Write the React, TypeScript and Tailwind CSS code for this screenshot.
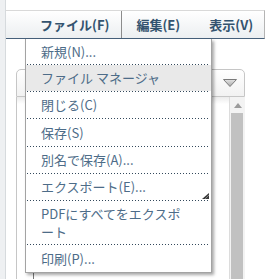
import type { ReactNode } from "react";

type Item = { label: ReactNode; h: string; active?: boolean; grip?: boolean };

const ITEMS: Item[] = [
  { label: "新規(N)...", h: "h-[25px]" },
  { label: "ファイル マネージャ", h: "h-[26px]", active: true },
  { label: "閉じる(C)", h: "h-[26px]" },
  { label: "保存(S)", h: "h-[27px]" },
  { label: "別名で保存(A)...", h: "h-[26px]" },
  { label: "エクスポート(E)...", h: "h-[26px]", grip: true },
  {
    label: (
      <>
        PDFにすべてをエクスポ
        <br />
        ート
      </>
    ),
    h: "h-[43px]",
  },
  { label: "印刷(P)...", h: "h-[27px]" },
];

function Dots() {
  return (
    <div className="mx-px h-px shrink-0 bg-[linear-gradient(to_right,#34495c_1px,transparent_1px)] bg-[length:3px_1px]" />
  );
}

function FileMenu() {
  return (
    <div className="absolute left-[25px] top-[39px] flex w-[187px] flex-col border border-t-0 border-[#a3a3a3] bg-white text-[13px] text-[#4d6c88] shadow-[2px_2px_3px_rgba(0,0,0,0.35)]">
      {ITEMS.map((item, i) => (
        <div key={i} className="flex flex-col">
          {i > 0 && <Dots />}
          <div
            className={
              "relative flex items-center whitespace-nowrap pl-[15px] leading-[18px] " +
              item.h +
              (item.active ? " bg-[#e9e9e9]" : "")
            }
          >
            <span>{item.label}</span>
            {item.grip && (
              <svg
                className="absolute bottom-px right-[2px]"
                width="7"
                height="6"
                viewBox="0 0 7 6"
              >
                <polygon points="7,0 7,6 0,6" fill="#3a3a3a" />
                <line x1="3" y1="6" x2="7" y2="2" stroke="#9a9a9a" strokeWidth="0.8" />
              </svg>
            )}
          </div>
        </div>
      ))}
    </div>
  );
}

export default function App() {
  return (
    <div className="relative flex h-[279px] w-[268px] overflow-hidden bg-white font-['Noto_Sans_CJK_JP','Noto_Sans',sans-serif]">
      <div className="w-[6px] shrink-0 border-r border-[#d6dadd] bg-[#eef0f2]" />

      <div className="flex min-w-0 flex-1 flex-col">
        <div className="h-[10px] shrink-0" />

        {/* menu bar */}
        <div className="flex h-[29px] w-[259px] shrink-0 items-center overflow-hidden whitespace-nowrap border-b border-r border-t border-b-[#46607a] border-r-[#b4b4b4] border-t-[#d9d9d9] bg-gradient-to-b from-white to-[#eceff1] pl-[34px] text-[13px] font-bold text-[#33536f]">
          <span className="flex h-full shrink-0 items-center border-r border-[#8c8c8c] pr-[12px]">
            ファイル(F)
          </span>
          <span className="shrink-0 pl-[14px]">編集(E)</span>
          <span className="ml-[29px] shrink-0">表示(V)</span>
        </div>

        {/* panel behind the menu */}
        <div className="flex min-h-0 flex-1 pl-[10px] pt-[30px]">
          <div className="flex w-[229px] flex-col">
            <div className="flex h-[28px] shrink-0 items-center justify-end rounded-t-[5px] border border-[#c6c6c6] bg-gradient-to-b from-white to-[#f2f2f2] pr-[7px]">
              <svg width="14" height="8" viewBox="0 0 14 8">
                <defs>
                  <linearGradient id="tri" x1="0" y1="0" x2="0" y2="1">
                    <stop offset="0" stopColor="#e4e4e4" />
                    <stop offset="1" stopColor="#a8a8a8" />
                  </linearGradient>
                </defs>
                <polygon points="0.5,0.5 13.5,0.5 7,7.5" fill="url(#tri)" stroke="#7a7a7a" strokeWidth="1" />
              </svg>
            </div>
            <div className="flex min-h-0 flex-1 border-l border-[#c6c6c6]">
              <div className="flex flex-1 bg-gradient-to-b from-[#ebebeb] to-white bg-[length:100%_7px] bg-no-repeat pt-[6px]">
                <div className="ml-[16px] border-l border-[#777]" />
              </div>
              <div className="flex w-[16px] shrink-0 flex-col border-l border-[#dcdcdc] bg-[#f3f3f3] pt-[6px]">
                <svg className="mx-auto" width="8" height="5" viewBox="0 0 8 5">
                  <polygon points="0,5 8,5 4,0" fill="#9c9c9c" />
                </svg>
                <div className="ml-px mr-[2px] mt-[5px] flex-1 bg-[#c1c1c1]" />
              </div>
            </div>
          </div>
        </div>
      </div>

      <FileMenu />
    </div>
  );
}
